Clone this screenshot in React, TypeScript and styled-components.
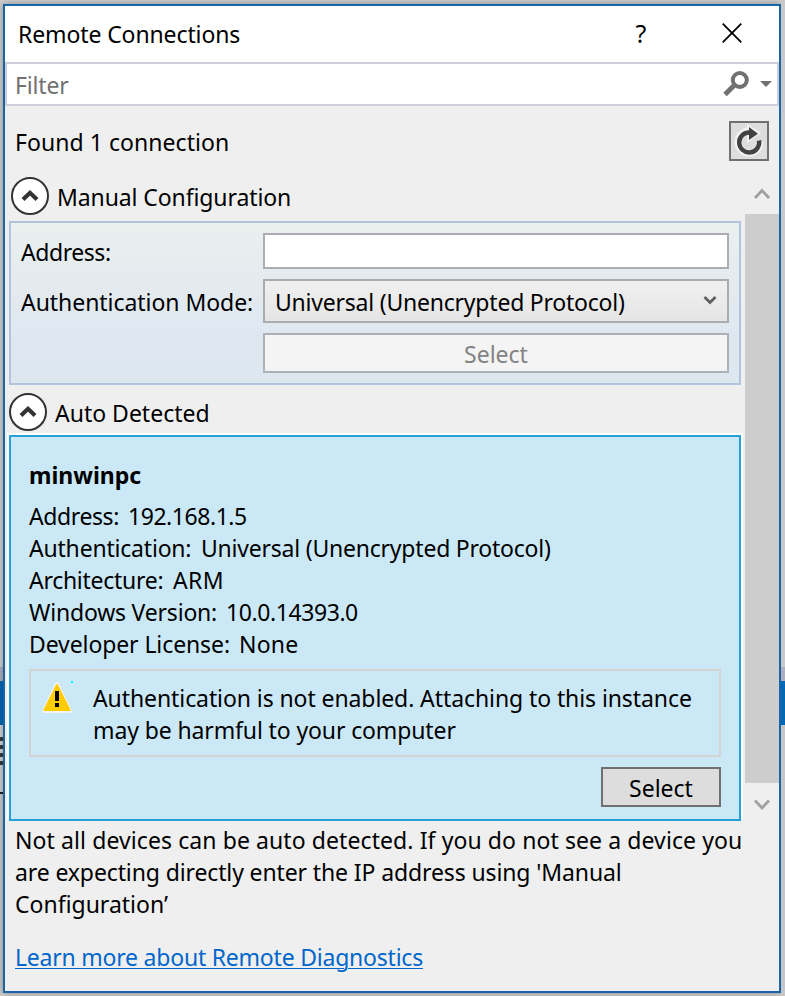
import React from "react";
import styled, { createGlobalStyle } from "styled-components";

const GlobalStyle = createGlobalStyle`
  *, *::before, *::after { box-sizing: border-box; }
  body {
    margin: 0;
    background: #cfcfcf;
    color: #000;
    font: 23px/32px "Noto Sans", "Open Sans", sans-serif;
  }
`;

const Desktop = styled.div`
  display: grid;
  grid-template-columns: 3px 778px 4px;
  height: 996px;
  overflow: hidden;
`;

const Edge = styled.div`
  display: flex;
  flex-direction: column;
`;

const Strip = styled.div<{ $h: number; $c: string }>`
  flex: none;
  height: ${(p) => p.$h}px;
  background: ${(p) => p.$c};
`;

const Dialog = styled.main`
  display: flex;
  flex-direction: column;
  height: 989px;
  margin-top: 4px;
  border: 2px solid #1767a8;
  background: #efefef;
  box-shadow: 0 0 7px rgba(0, 0, 0, 0.35);
`;

const TitleBar = styled.header`
  display: flex;
  height: 56px;
  padding: 12px 0 0 13px;
  background: #fff;
`;

const Title = styled.h1`
  flex: 1;
  margin: 0;
  font: inherit;
`;

const TitleButton = styled.button`
  display: flex;
  border: 0;
  padding: 0;
  background: none;
  font: inherit;
  color: #000;
`;

const HelpButton = styled(TitleButton)`
  width: 14px;
  height: 32px;
  justify-content: center;
  font-size: 25px;
  margin: -1px 74px 0 0;
`;

const CloseButton = styled(TitleButton)`
  width: 20px;
  margin: 5px 37px 0 0;
`;

const Text = styled.span<{ $s?: number }>`
  display: inline-block;
  white-space: nowrap;
  letter-spacing: ${(p) => p.$s ?? 0}px;
`;

const FilterBox = styled.div`
  display: flex;
  height: 44px;
  padding: 5px 5px 0 8px;
  border: 2px solid #cccedb;
  background: #fff;
  color: #717171;
`;

const FilterLabel = styled.div`
  flex: 1;
`;

const SearchIcon = styled.svg`
  margin: 0 11px 0 0;
`;

const StatusRow = styled.div`
  display: flex;
  justify-content: space-between;
  height: 68px;
  padding: 15px 10px 0 10px;
`;

const Status = styled.div`
  padding-top: 5px;
`;

const RefreshButton = styled.button`
  width: 40px;
  height: 40px;
  padding: 0;
  border: 2px solid #707070;
  background: #ddd;

  svg { display: block; }
`;

const ScrollArea = styled.div`
  display: grid;
  grid-template-columns: 740px 34px;
  height: 647px;
`;

const Content = styled.div`
  display: flex;
  flex-direction: column;
`;

const SectionHeader = styled.div<{ $left: number; $top: number; $height: number }>`
  display: flex;
  gap: 8px;
  height: ${(p) => p.$height}px;
  padding: ${(p) => p.$top}px 0 0 ${(p) => p.$left}px;

  svg { flex: none; }
  ${Text} { margin-top: 4px; }
`;

const ManualPanel = styled.section`
  display: grid;
  grid-template-columns: 242px 466px;
  grid-template-rows: 36px 44px 40px;
  row-gap: 10px;
  width: 732px;
  height: 164px;
  margin-left: 4px;
  padding: 10px;
  border: 2px solid #b0c4de;
  background: linear-gradient(#e9f0ee, #e0e8f1 62%, #dce7f0);
`;

const FieldLabel = styled.label<{ $top: number }>`
  padding-top: ${(p) => p.$top}px;
`;

const AddressInput = styled.input`
  width: 466px;
  height: 36px;
  border: 2px solid #abadb3;
  border-radius: 0;
  background: #fff;
`;

const Combo = styled.div`
  display: flex;
  justify-content: space-between;
  padding: 5px 10px 0 10px;
  border: 2px solid #acacac;
  background: linear-gradient(#f0f0f0, #e5e5e5);

  svg { margin-top: 7px; }
`;

const DisabledButton = styled.button`
  grid-column: 2;
  padding: 0;
  border: 2px solid #adb2b5;
  background: #f4f4f4;
  font: inherit;
  color: #838383;

  ${Text} { display: block; margin-top: 2px; }
`;

const DeviceCard = styled.section`
  display: flex;
  flex-direction: column;
  width: 732px;
  height: 386px;
  margin-left: 4px;
  padding: 22px 18px 12px;
  border: 2px solid #26a0da;
  background: #cbe8f6;
  box-shadow: 2px -2px #fff, -2px -2px #fff;
`;

const DeviceName = styled.h2`
  height: 41px;
  margin: 0;
  font: inherit;
  font-weight: 700;
`;

const Detail = styled.div<{ $key: number }>`
  display: grid;
  grid-template-columns: ${(p) => p.$key}px 1fr;
  height: 32px;
`;

const Warning = styled.div`
  display: flex;
  gap: 19px;
  height: 88px;
  margin-top: 9px;
  padding: 10px 0 0 10px;
  border: 2px solid #d3d3d3;

  svg { flex: none; }
`;

const Lines = styled.div`
  display: flex;
  flex-direction: column;
  align-items: flex-start;
  padding-top: 1px;
`;

const SelectButton = styled.button`
  align-self: flex-end;
  width: 120px;
  height: 40px;
  margin-top: 10px;
  padding: 0;
  border: 2px solid #707070;
  background: #ddd;
  font: inherit;
  color: #000;

  ${Text} { display: block; margin-top: 2px; }
`;

const ScrollBar = styled.div`
  display: flex;
  flex-direction: column;

  svg { display: block; flex: none; }
`;

const Thumb = styled.div`
  flex: none;
  height: 569px;
  background: #cdcdcd;
`;

const Footer = styled.footer`
  display: flex;
  flex-direction: column;
  align-items: flex-start;
  padding: 3px 0 0 10px;
`;

const Link = styled.a`
  height: 32px;
  margin-top: 21px;
  white-space: nowrap;
  letter-spacing: -0.22px;
  color: #0066cc;
  text-decoration: underline;
  text-decoration-thickness: 1px;
  text-underline-offset: 2px;
`;

const ExpandIcon = () => (
  <svg width="38" height="38" viewBox="0 0 38 38">
    <circle cx="19" cy="19" r="18" fill="#fff" stroke="#333" strokeWidth="2" />
    <path d="M12 22.5 19 15.8 26 22.5" fill="none" stroke="#333" strokeWidth="4.2" />
  </svg>
);

const details = [
  { key: "Address:", keyWidth: 99, ks: -0.4, value: "192.168.1.5", vs: -0.45 },
  { key: "Authentication:", keyWidth: 172, ks: -0.2, value: "Universal (Unencrypted Protocol)", vs: -0.22 },
  { key: "Architecture:", keyWidth: 144, ks: -0.28, value: "ARM", vs: 0.4 },
  { key: "Windows Version:", keyWidth: 197, ks: -0.2, value: "10.0.14393.0", vs: -0.42 },
  { key: "Developer License:", keyWidth: 210, ks: -0.1, value: "None", vs: 0.2 },
];

export default function App() {
  return (
    <>
      <GlobalStyle />
      <Desktop>
        <Edge>
          <Strip $h={667} $c="#cfcfcf" />
          <Strip $h={14} $c="#aeb0bd" />
          <Strip $h={44} $c="#0067b5" />
          <Strip $h={12} $c="#d2d2d2" />
          <Strip $h={4} $c="#3b3b3b" />
          <Strip $h={4} $c="#d2d2d2" />
          <Strip $h={4} $c="#3b3b3b" />
          <Strip $h={4} $c="#d2d2d2" />
          <Strip $h={4} $c="#3b3b3b" />
          <Strip $h={4} $c="#d2d2d2" />
          <Strip $h={4} $c="#3b3b3b" />
          <Strip $h={27} $c="#cfcfcf" />
          <Strip $h={2} $c="#222" />
          <Strip $h={202} $c="#cbcbcb" />
        </Edge>
        <Dialog>
          <TitleBar>
            <Title><Text $s={-0.11}>Remote Connections</Text></Title>
            <HelpButton aria-label="Help">?</HelpButton>
            <CloseButton aria-label="Close">
              <svg width="20" height="20" viewBox="0 0 20 20">
                <path d="M.7.7 19.3 19.3M19.3.7.7 19.3" stroke="#000" strokeWidth="1.8" />
              </svg>
            </CloseButton>
          </TitleBar>
          <FilterBox>
            <FilterLabel><Text $s={-0.15}>Filter</Text></FilterLabel>
            <SearchIcon width="27" height="30" viewBox="0 0 27 30">
              <circle cx="17.8" cy="11" r="7" fill="none" stroke="#717171" strokeWidth="4" />
              <path d="M13 15.5 3 25.5" stroke="#717171" strokeWidth="5" />
            </SearchIcon>
            <svg width="12" height="30" viewBox="0 0 12 30">
              <path d="M0 12h12l-6 6z" fill="#717171" />
            </svg>
          </FilterBox>
          <StatusRow>
            <Status><Text $s={0.05}>Found 1 connection</Text></Status>
            <RefreshButton aria-label="Refresh">
              <svg width="36" height="36" viewBox="0 0 36 36">
                <path d="M18 8a11 11 0 1 0 11 11" fill="none" stroke="#f2f2f2" strokeWidth="7" />
                <path d="M17 2.5 28.5 10 17 18z" fill="#f2f2f2" stroke="#f2f2f2" strokeWidth="2" />
                <path d="M19 9.5A10 10 0 1 0 28 17.5" fill="none" stroke="#424242" strokeWidth="4.4" />
                <path d="M18 4 27 10.7 18 17z" fill="#424242" />
              </svg>
            </RefreshButton>
          </StatusRow>
          <ScrollArea>
            <Content>
              <SectionHeader $left={6} $top={3} $height={47}>
                <ExpandIcon />
                <Text $s={-0.1}>Manual Configuration</Text>
              </SectionHeader>
              <ManualPanel>
                <FieldLabel $top={3}><Text $s={-0.45}>Address:</Text></FieldLabel>
                <AddressInput aria-label="Address" />
                <FieldLabel $top={7}><Text $s={-0.05}>Authentication Mode:</Text></FieldLabel>
                <Combo>
                  <Text $s={-0.22}>Universal (Unencrypted Protocol)</Text>
                  <svg width="14" height="14" viewBox="0 0 14 14">
                    <path d="M1.5 4 7 9.5 12.5 4" fill="none" stroke="#606060" strokeWidth="2.8" />
                  </svg>
                </Combo>
                <DisabledButton disabled><Text>Select</Text></DisabledButton>
              </ManualPanel>
              <SectionHeader $left={4} $top={8} $height={50}>
                <ExpandIcon />
                <Text>Auto Detected</Text>
              </SectionHeader>
              <DeviceCard>
                <DeviceName><Text>minwinpc</Text></DeviceName>
                {details.map((d) => (
                  <Detail key={d.key} $key={d.keyWidth}>
                    <Text $s={d.ks}>{d.key}</Text>
                    <Text $s={d.vs}>{d.value}</Text>
                  </Detail>
                ))}
                <Warning>
                  <svg width="33" height="33" viewBox="0 0 33 33">
                    <path d="M16 3 29 30H3z" fill="#f3f3f3" stroke="#f3f3f3" strokeWidth="4" strokeLinejoin="round" />
                    <path d="M16 4 28.5 29H3.5z" fill="#fc0" stroke="#fc0" strokeWidth="2" strokeLinejoin="round" />
                    <path d="M14 10h4v10h-4zM14 22h4v4h-4z" fill="#000" />
                    <path d="M30 0h2v2h-2z" fill="#00f5ff" />
                  </svg>
                  <Lines>
                    <Text $s={-0.09}>Authentication is not enabled. Attaching to this instance</Text>
                    <Text $s={-0.12}>may be harmful to your computer</Text>
                  </Lines>
                </Warning>
                <SelectButton><Text>Select</Text></SelectButton>
              </DeviceCard>
            </Content>
            <ScrollBar>
              <svg width="34" height="40" viewBox="0 0 34 40">
                <path d="M10 24 17 16.5 24 24" fill="none" stroke="#a0a0a0" strokeWidth="2.8" />
              </svg>
              <Thumb />
              <svg width="34" height="38" viewBox="0 0 34 38">
                <path d="M10 17.5 17 25 24 17.5" fill="none" stroke="#a0a0a0" strokeWidth="2.8" />
              </svg>
            </ScrollBar>
          </ScrollArea>
          <Footer>
            <Text $s={0.09}>Not all devices can be auto detected. If you do not see a device you</Text>
            <Text $s={-0.12}>are expecting directly enter the IP address using 'Manual</Text>
            <Text>Configuration’</Text>
            <Link>Learn more about Remote Diagnostics</Link>
          </Footer>
        </Dialog>
        <Edge>
          <Strip $h={667} $c="#c9c9cc" />
          <Strip $h={14} $c="#aeb0bd" />
          <Strip $h={44} $c="#0067b5" />
          <Strip $h={271} $c="#c6c6c9" />
        </Edge>
      </Desktop>
    </>
  );
}
